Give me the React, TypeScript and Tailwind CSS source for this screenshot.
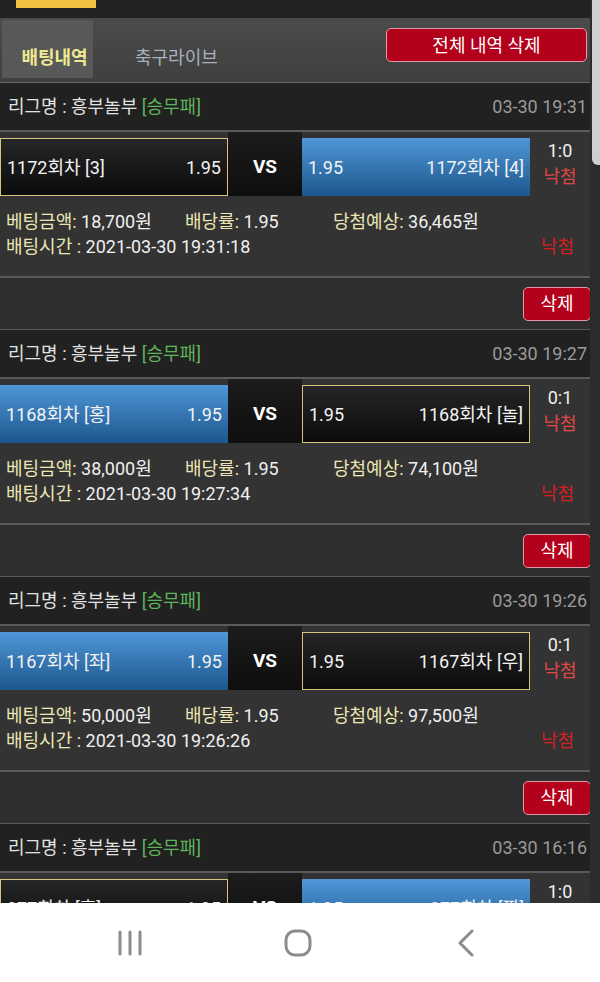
type Side = {
    label: string;
    odd: string;
    picked: boolean;
};

type Bet = {
    time: string;
    left: Side;
    right: Side;
    score: string;
    amount: string;
    win: string;
    placed: string;
};

const bets: Bet[] = [
    {
        time: "03-30 19:31",
        left: { label: "1172회차 [3]", odd: "1.95", picked: true },
        right: { label: "1172회차 [4]", odd: "1.95", picked: false },
        score: "1:0",
        amount: "18,700원",
        win: "36,465원",
        placed: "2021-03-30 19:31:18",
    },
    {
        time: "03-30 19:27",
        left: { label: "1168회차 [홍]", odd: "1.95", picked: false },
        right: { label: "1168회차 [놀]", odd: "1.95", picked: true },
        score: "0:1",
        amount: "38,000원",
        win: "74,100원",
        placed: "2021-03-30 19:27:34",
    },
    {
        time: "03-30 19:26",
        left: { label: "1167회차 [좌]", odd: "1.95", picked: false },
        right: { label: "1167회차 [우]", odd: "1.95", picked: true },
        score: "0:1",
        amount: "50,000원",
        win: "97,500원",
        placed: "2021-03-30 19:26:26",
    },
    {
        time: "03-30 16:16",
        left: { label: "977회차 [홀]", odd: "1.95", picked: true },
        right: { label: "977회차 [짝]", odd: "1.95", picked: false },
        score: "1:0",
        amount: "20,000원",
        win: "39,000원",
        placed: "2021-03-30 16:16:02",
    },
];

const boxClass = (picked: boolean) =>
    picked
        ? "bg-gradient-to-b from-[#262626] to-[#0c0c0c] border-[1.5px] border-[#d8c27c]"
        : "bg-gradient-to-b from-[#4f97d8] to-[#1c578e]";

const BetCard = ({ bet }: { bet: Bet }) => {
    return (
        <div className="flex flex-col">
            {/* league header */}
            <div className="h-[47px] bg-[#212121] flex items-center justify-between pl-[8px] pr-[3px] text-[18px]">
                <div className="text-[#e2e2e2]">
                    리그명 : 흥부놀부 <span className="text-[#5fb35a]">[승무패]</span>
                </div>
                <div className="text-[#9a9a9a]">{bet.time}</div>
            </div>
            <div className="h-[2px] bg-[#5a5a5a]" />

            {/* body */}
            <div className="h-[144px] bg-[#333333] flex flex-col">
                <div className="h-[64px] flex text-[18px] text-[#f2f2f2]">
                    <div
                        className={`w-[228px] h-[58px] self-end flex items-center justify-between px-[6px] ${boxClass(bet.left.picked)}`}
                    >
                        <span>{bet.left.label}</span>
                        <span>{bet.left.odd}</span>
                    </div>
                    <div className="w-[74px] h-[64px] bg-gradient-to-b from-[#1c1c1c] to-[#0e0e0e] flex items-center justify-center pt-[6px] font-bold text-[19px] text-white">
                        VS
                    </div>
                    <div
                        className={`w-[228px] h-[58px] self-end flex items-center justify-between px-[6px] ${boxClass(bet.right.picked)}`}
                    >
                        <span>{bet.right.odd}</span>
                        <span>{bet.right.label}</span>
                    </div>
                    <div className="w-[60px] flex flex-col items-center pt-[6px] leading-[26px] text-[18px]">
                        <span className="text-[#f0f0f0]">{bet.score}</span>
                        <span className="text-[#e04848]">낙첨</span>
                    </div>
                </div>
                <div className="pt-[13px] pl-[6px] text-[18px] leading-[25px] text-[#f0f0f0]">
                    <div className="flex">
                        <div className="w-[179px]">
                            <span className="text-[#ebe6b2]">베팅금액:</span> {bet.amount}
                        </div>
                        <div className="w-[148px]">
                            <span className="text-[#ebe6b2]">배당률:</span> {bet.left.odd}
                        </div>
                        <div>
                            <span className="text-[#ebe6b2]">당첨예상:</span> {bet.win}
                        </div>
                    </div>
                    <div className="flex justify-between pr-[16px]">
                        <div>
                            <span className="text-[#ebe6b2]">배팅시간 :</span> {bet.placed}
                        </div>
                        <span className="text-[#d42020]">낙첨</span>
                    </div>
                </div>
            </div>
            <div className="h-[2px] bg-[#5a5a5a]" />

            {/* delete */}
            <div className="h-[51px] bg-[#2e2e2e] flex items-center justify-end">
                <button className="w-[68px] h-[34px] rounded-[5px] bg-[#b3001b] border border-[#e39aa6] text-white text-[18px] mr-[-1px]">
                    삭제
                </button>
            </div>
            <div className="h-[1px] bg-[#5a5a5a]" />
        </div>
    );
};

const App = () => {
    return (
        <div
            className="w-[600px] h-[982px] bg-[#2c2c2c] flex flex-col overflow-hidden relative"
            style={{ fontFamily: "Roboto, 'Noto Sans CJK KR', sans-serif" }}
        >
            <div className="flex-1 overflow-hidden w-[590px]">
                {/* top strip */}
                <div className="h-[18px] bg-[#222222] pl-[16px]">
                    <div className="w-[80px] h-[8px] bg-[#f2c241]" />
                </div>

                {/* tabs */}
                <div className="h-[64px] bg-gradient-to-b from-[#4b4b4b] to-[#3f3f3f] flex items-start">
                    <div className="ml-[2px] mt-[2px] w-[91px] h-[58px] bg-[#585858] flex items-center justify-center pt-[16px] pl-[14px] text-[18px] font-bold text-[#eeea92]">
                        배팅내역
                    </div>
                    <div className="ml-[42px] mt-[2px] h-[58px] flex items-center pt-[16px] text-[18px] text-[#a9b1be]">
                        축구라이브
                    </div>
                    <div className="flex-1" />
                    <button className="mt-[10px] mr-[3px] w-[201px] h-[34px] rounded-[5px] bg-[#b3001b] border border-[#e39aa6] text-white text-[18px]">
                        전체 내역 삭제
                    </button>
                </div>
                <div className="h-[1px] bg-[#6a6a6a]" />

                {bets.map((bet, i) => (
                    <BetCard key={i} bet={bet} />
                ))}
            </div>

            {/* scrollbar */}
            <div className="absolute right-0 top-0 w-[8px] h-[165px] bg-[#cfcfcf] rounded-bl-[6px]" />

            {/* android nav bar */}
            <div className="h-[79px] bg-white flex items-center justify-center pr-[4px]">
                <div className="w-[168px] flex justify-center">
                    <svg width="26" height="26" viewBox="0 0 26 26" fill="none" stroke="#8c8c8c" strokeWidth="3" strokeLinecap="round">
                        <path d="M3 2v22M13 2v22M23 2v22" />
                    </svg>
                </div>
                <div className="w-[168px] flex justify-center">
                    <svg width="28" height="28" viewBox="0 0 28 28" fill="none" stroke="#8c8c8c" strokeWidth="3">
                        <rect x="2" y="2" width="24" height="24" rx="9" />
                    </svg>
                </div>
                <div className="w-[168px] flex justify-center">
                    <svg width="18" height="28" viewBox="0 0 18 28" fill="none" stroke="#8c8c8c" strokeWidth="3" strokeLinecap="round" strokeLinejoin="round">
                        <path d="M15 2L3 14l12 12" />
                    </svg>
                </div>
            </div>
        </div>
    );
};

export default App;
